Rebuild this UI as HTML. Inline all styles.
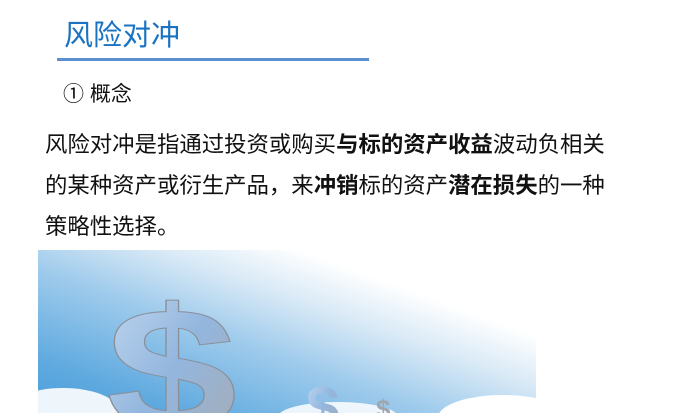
<!DOCTYPE html>
<html><head><meta charset="utf-8"><style>
html,body{margin:0;width:692px;height:413px;overflow:hidden;}
body{background:#fff;position:relative;font-family:"Liberation Sans","Noto Sans CJK SC",sans-serif;}
.t{position:absolute;left:64px;top:17px;font-size:29px;color:#1a73c2;line-height:38px;}
.u{position:absolute;left:57px;top:58px;width:312px;height:3px;background:#5b8fd0;}
.s{position:absolute;left:63px;top:81px;font-size:21px;color:#111;line-height:28px;}
.p{position:absolute;left:45px;top:124px;width:565px;font-size:22.4px;line-height:41px;color:#111;}
.img{position:absolute;left:38px;top:250px;width:498px;height:163px;overflow:hidden;
background:linear-gradient(200deg,#fff 0%,#fff 25%,#d8e9f6 40%,#9fcbec 58%,#5ea9df 85%,#4c9fdc 100%);}
.cl{position:absolute;border-radius:50%;background:#fff;}
</style></head><body>
<div class="t">风险对冲</div>
<div class="u"></div>
<div class="s">① 概念</div>
<div class="p">风险对冲是指通过投资或购买<b>与标的资产收益</b>波动负相关的某种资产或衍生产品，来<b>冲销</b>标的资产<b>潜在损失</b>的一种策略性选择。</div>
<div class="img">
<div class="cl" style="left:-30px;top:138px;width:110px;height:45px;opacity:.9"></div>
<div class="cl" style="left:240px;top:152px;width:120px;height:30px;opacity:.85"></div>
<div class="cl" style="left:400px;top:145px;width:130px;height:45px;"></div>
<svg width="498" height="163" style="position:absolute;left:0;top:0">
<defs><linearGradient id="g" x1="0" y1="0" x2="1" y2="1"><stop offset="0" stop-color="#c4daf1"/><stop offset=".5" stop-color="#93b6de"/><stop offset="1" stop-color="#a8aab0"/></linearGradient></defs>
<text transform="translate(68,180) scale(1.35,1)" font-family="Liberation Sans" font-weight="bold" font-size="175" fill="url(#g)" stroke="#8a8f98" stroke-width="1">$</text>
<text x="268" y="178" font-family="Liberation Sans" font-weight="bold" font-size="60" fill="url(#g)">$</text>
<text x="338" y="168" font-family="Liberation Sans" font-weight="bold" font-size="26" fill="#a0a6ae">$</text>
</svg>
</div>
</body></html>
